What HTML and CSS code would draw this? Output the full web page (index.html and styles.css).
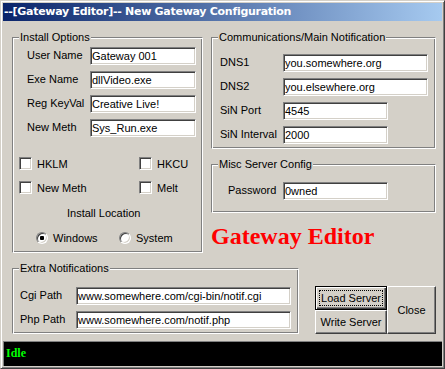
FILE: index.html
```html
<!DOCTYPE html>
<html lang="en">
<head>
  <meta charset="UTF-8">
  <meta name="viewport" content="width=device-width, initial-scale=1.0">
  <title>Gateway Editor</title>
  <link rel="stylesheet" href="styles.css">
</head>
<body>
  <div class="window">
    <div class="titlebar">--[Gateway Editor]-- New Gateway Configuration</div>
    <div class="client">
      <div class="top">
        <fieldset class="group install">
          <legend>Install Options</legend>
          <div class="gbody">
            <div class="fields">
              <label>User Name</label><input class="field" type="text" value="Gateway 001">
              <label>Exe Name</label><input class="field" type="text" value="dllVideo.exe">
              <label>Reg KeyVal</label><input class="field" type="text" value="Creative Live!">
              <label>New Meth</label><input class="field" type="text" value="Sys_Run.exe">
            </div>
            <div class="checks">
              <label class="check"><input type="checkbox">HKLM</label>
              <label class="check"><input type="checkbox">HKCU</label>
              <label class="check"><input type="checkbox">New Meth</label>
              <label class="check"><input type="checkbox">Melt</label>
            </div>
            <div class="loc-title">Install Location</div>
            <div class="radios">
              <label class="radio"><input type="radio" name="loc" checked>Windows</label>
              <label class="radio"><input type="radio" name="loc">System</label>
            </div>
          </div>
        </fieldset>

        <div class="right">
          <fieldset class="group comms">
            <legend>Communications/Main Notification</legend>
            <div class="gbody fields">
              <label>DNS1</label><input class="field wide" type="text" value="you.somewhere.org">
              <label>DNS2</label><input class="field wide" type="text" value="you.elsewhere.org">
              <label>SiN Port</label><input class="field short" type="text" value="4545">
              <label>SiN Interval</label><input class="field short" type="text" value="2000">
            </div>
          </fieldset>
          <fieldset class="group misc">
            <legend>Misc Server Config</legend>
            <div class="gbody fields">
              <label>Password</label><input class="field short" type="text" value="0wned">
            </div>
          </fieldset>
          <div class="brand">Gateway Editor</div>
        </div>
      </div>

      <div class="bottom">
        <fieldset class="group extra">
          <legend>Extra Notifications</legend>
          <div class="gbody fields">
            <label>Cgi Path</label><input class="field" type="text" value="www.somewhere.com/cgi-bin/notif.cgi">
            <label>Php Path</label><input class="field" type="text" value="www.somewhere.com/notif.php">
          </div>
        </fieldset>
        <div class="buttons">
          <div class="btn-stack">
            <button class="btn default">Load Server</button>
            <button class="btn">Write Server</button>
          </div>
          <button class="btn close">Close</button>
        </div>
      </div>
    </div>
    <div class="status">Idle</div>
  </div>
</body>
</html>
```

FILE: styles.css
```css
* { box-sizing: border-box; margin: 0; padding: 0; }
body { font-family: "Liberation Sans", Arial, sans-serif; font-size: 11px; background: #d4d0c8; color: #000; }

.window {
  width: 445px;
  height: 369px;
  background: #d4d0c8;
  border: 1px solid;
  border-color: #d4d0c8 #404040 #404040 #d4d0c8;
  padding: 2px;
  box-shadow: inset 1px 1px #fff, inset -1px -1px #808080;
  display: flex;
  flex-direction: column;
}

.titlebar {
  height: 18px;
  line-height: 18px;
  padding-left: 1px;
  color: #fff;
  font-family: "DejaVu Sans", Verdana, sans-serif;
  font-weight: bold;
  font-size: 11px;
  letter-spacing: -0.28px;
  background: linear-gradient(90deg, #0a246a, #a6caf0);
  white-space: nowrap;
}

.client { height: 320px; padding: 10px 6px 0 9px; }

.top { display: flex; gap: 8px; height: 222px; }
.bottom { display: flex; gap: 16px; margin-top: 9px; height: 72px; }

/* etched group box */
.group {
  border: 1px solid;
  border-color: #808080 #fff #fff #808080;
  box-shadow: inset 1px 1px #fff, inset -1px -1px #808080;
  min-width: 0;
  padding: 0;
}
.group legend {
  margin-left: 6px;
  padding: 0 1px;
  line-height: 13px;
  background: #d4d0c8;
}

.field {
  height: 18px;
  border: 1px solid;
  border-color: #808080 #fff #fff #808080;
  box-shadow: inset 1px 1px #404040, inset -1px -1px #d4d0c8;
  background: #fff;
  padding: 0 1px;
  font: 11px "Liberation Sans", Arial, sans-serif;
  color: #000;
  outline: none;
}

.fields { display: grid; row-gap: 6px; align-items: center; }
.fields label { padding-bottom: 3px; }

/* install options */
.install { width: 191px; }
.install .gbody { padding-left: 14px; }
.install .fields { grid-template-columns: 63px 106px; padding-top: 3px; }

.checks {
  display: grid;
  grid-template-columns: 120px auto;
  row-gap: 11px;
  margin: 20px 0 0 -8px;
}
.check { display: flex; align-items: center; gap: 5px; height: 13px; }
.check input {
  appearance: none;
  width: 13px;
  height: 13px;
  border: 1px solid;
  border-color: #808080 #fff #fff #808080;
  box-shadow: inset 1px 1px #404040, inset -1px -1px #d4d0c8;
  background: #fff;
}

.loc-title { margin: 13px 0 0 40px; line-height: 13px; }

.radios { display: flex; margin: 12px 0 0 9px; }
.radio { display: flex; align-items: center; gap: 5px; height: 12px; width: 88px; }
.radio input {
  appearance: none;
  width: 12px;
  height: 12px;
  border-radius: 50%;
  border: 1px solid;
  border-color: #808080 #fff #fff #808080;
  box-shadow: inset 1px 1px #404040, inset -1px -1px #d4d0c8;
  background: #fff;
}
.radio input:checked { background: radial-gradient(circle, #000 0 2px, #fff 2.5px); }

/* right column */
.right { width: 225px; display: flex; flex-direction: column; }
.comms .gbody { grid-template-columns: 63px auto; padding: 10px 0 4px 8px; }
.wide { width: 145px; }
.short { width: 105px; }

.misc { margin-top: 9px; }
.misc .gbody { grid-template-columns: 55px auto; padding: 11px 0 12px 16px; }

.brand {
  margin-top: 10px;
  font-family: "Liberation Serif", "Times New Roman", serif;
  font-weight: bold;
  font-size: 24px;
  color: #f00;
  line-height: 27px;
}

/* extra notifications */
.extra { width: 287px; }
.extra .gbody { grid-template-columns: 56px 215px; padding: 12px 0 0 7px; }

.buttons { display: flex; align-self: flex-end; }
.btn-stack { display: flex; flex-direction: column; }
.btn {
  font: 11px "Liberation Sans", Arial, sans-serif;
  color: #000;
  background: #d4d0c8;
  border: 1px solid;
  border-color: #fff #404040 #404040 #fff;
  box-shadow: inset -1px -1px #808080;
  width: 72px;
  height: 24px;
}
.btn.default {
  border-color: #000;
  box-shadow: inset 1px 1px #fff, inset -1px -1px #404040, inset -2px -2px #808080;
  outline: 1px dotted #000;
  outline-offset: -5px;
}
.btn.close { width: 49px; height: 48px; }

.status {
  height: 25px;
  background: #000;
  border-top: 1px solid #808080;
  border-left: 1px solid #808080;
  color: #0f0;
  font-family: "Liberation Serif", "Times New Roman", serif;
  font-weight: bold;
  font-size: 12px;
  padding: 4px 0 0 2px;
}
```
